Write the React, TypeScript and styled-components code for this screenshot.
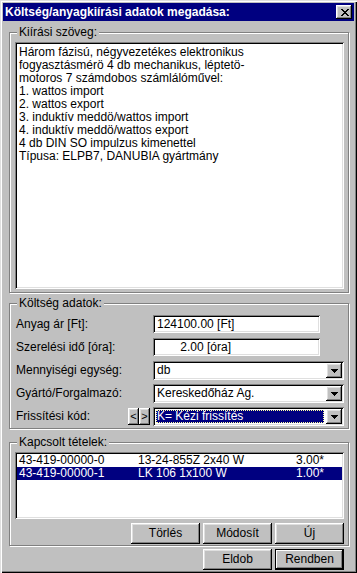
import React from "react";
import styled, { createGlobalStyle, css } from "styled-components";

const GlobalStyle = createGlobalStyle`
  html, body { margin: 0; padding: 0; background: #c0c0c0; }
  body { font-family: "Liberation Sans", Arial, sans-serif; font-size: 12px; }
  * { box-sizing: border-box; }
`;

const raised = css`
  background: #c0c0c0;
  box-shadow: inset -1px -1px #000, inset 1px 1px #fff, inset -2px -2px #808080, inset 2px 2px #dfdfdf;
`;

const sunken = css`
  background: #fff;
  box-shadow: inset 1px 1px #808080, inset -1px -1px #fff, inset 2px 2px #000, inset -2px -2px #dfdfdf;
`;

const Window = styled.div`
  width: 357px;
  height: 573px;
  background: #c0c0c0;
  padding: 3px;
  box-shadow: inset 1px 1px #dfdfdf, inset 2px 2px #fff, inset -1px -1px #000, inset -2px -2px #808080;
  display: flex;
  flex-direction: column;
  color: #000;
  font-family: "Liberation Sans", Arial, sans-serif;
  font-size: 12px;
  line-height: 13px;
`;

const TitleBar = styled.div`
  height: 18px;
  flex: none;
  background: #000080;
  color: #fff;
  font-weight: bold;
  font-size: 12px;
  display: flex;
  align-items: center;
  justify-content: space-between;
  padding: 0 2px;
`;

const TitleText = styled.span`
  white-space: nowrap;
`;

const CloseButton = styled.div`
  ${raised};
  width: 16px;
  height: 14px;
  display: flex;
  align-items: center;
  justify-content: center;
  padding-left: 1px;
`;

const Group = styled.div<{ $mt: number }>`
  position: relative;
  flex: none;
  margin: ${(p) => p.$mt}px 5px 0 6px;
  border: 1px solid #808080;
  box-shadow: inset 1px 1px #fff, 1px 1px #fff;
`;

const GroupLabel = styled.span`
  position: absolute;
  top: -7px;
  left: 7px;
  padding: 0 2px;
  background: #c0c0c0;
  line-height: 13px;
  white-space: nowrap;
`;

const TextGroupBody = styled.div`
  padding: 9px 4px 3px 5px;
`;

const MemoBox = styled.div`
  ${sunken};
  width: 329px;
  height: 247px;
  padding: 4px 4px 2px 4px;
  white-space: pre-line;
  line-height: 13px;
`;

const FormGrid = styled.div`
  display: grid;
  grid-template-columns: 137px 191px;
  grid-auto-rows: 19px;
  row-gap: 4px;
  padding: 11px 4px 2px 6px;
`;

const FieldLabel = styled.div`
  display: flex;
  align-items: center;
  justify-content: space-between;
  padding-right: 3px;
  white-space: nowrap;
`;

const StepButtons = styled.div`
  display: flex;
  height: 17px;
`;

const StepButton = styled.div`
  ${raised};
  width: 11px;
  height: 17px;
  display: flex;
  align-items: center;
  justify-content: center;
  font-size: 11px;
  line-height: 11px;
`;

const Edit = styled.div`
  ${sunken};
  width: 167px;
  height: 18px;
  padding: 0 3px 0 4px;
  display: flex;
  align-items: center;
`;

const EditValue = styled.span`
  width: 74px;
  text-align: right;
  white-space: nowrap;
`;

const Combo = styled.div`
  ${sunken};
  width: 191px;
  height: 19px;
  padding: 2px;
  display: flex;
  align-items: stretch;
`;

const ComboValue = styled.div<{ $selected?: boolean }>`
  flex: 1;
  display: flex;
  align-items: center;
  padding-left: 2px;
  margin-right: 1px;
  white-space: nowrap;
  overflow: hidden;
  ${(p) =>
    p.$selected &&
    css`
      margin: 1px 2px 1px 1px;
      padding-left: 1px;
      background: #000080;
      color: #fff;
      outline: 1px dotted #ffffa0;
      outline-offset: -1px;
    `}
`;

const ComboButton = styled.div`
  ${raised};
  width: 16px;
  display: flex;
  align-items: center;
  justify-content: center;
`;

const ListGroupBody = styled.div`
  padding: 9px 4px 1px 5px;
`;

const ListBox = styled.div`
  ${sunken};
  width: 329px;
  height: 67px;
  padding: 2px;
`;

const ListRow = styled.div<{ $selected?: boolean }>`
  display: grid;
  grid-template-columns: 119px 158px 1fr;
  height: 13px;
  line-height: 13px;
  padding-left: 2px;
  white-space: nowrap;
  ${(p) =>
    p.$selected &&
    css`
      background: #000080;
      color: #fff;
    `}
`;

const ButtonRow = styled.div<{ $mt: number; $mr: number }>`
  display: flex;
  justify-content: flex-end;
  gap: 3px;
  margin: ${(p) => p.$mt}px ${(p) => p.$mr}px 0 0;
  flex: none;
`;

const PushButton = styled.div<{ $default?: boolean }>`
  width: 69px;
  height: 21px;
  display: flex;
  align-items: center;
  justify-content: center;
  ${raised};
  ${(p) =>
    p.$default &&
    css`
      box-shadow: inset 0 0 0 1px #000, inset -2px -2px #000, inset 2px 2px #fff, inset -3px -3px #808080;
    `}
`;

const ArrowDown = () => (
  <svg width="7" height="4" viewBox="0 0 7 4" shapeRendering="crispEdges">
    <path d="M0 0h7v1H0z M1 1h5v1H1z M2 2h3v1H2z M3 3h1v1H3z" fill="#000" />
  </svg>
);

const CloseGlyph = () => (
  <svg width="8" height="7" viewBox="0 0 8 7" shapeRendering="crispEdges">
    <path
      d="M0 0h2v1H0z M6 0h2v1H6z M1 1h2v1H1z M5 1h2v1H5z M2 2h4v1H2z M3 3h2v1H3z M2 4h4v1H2z M1 5h2v1H1z M5 5h2v1H5z M0 6h2v1H0z M6 6h2v1H6z"
      fill="#000"
    />
  </svg>
);

const memoText = `Három fázisú, négyvezetékes elektronikus
fogyasztásmérö 4 db mechanikus, léptetö-
motoros 7 számdobos számlálóművel:
1. wattos import
2. wattos export
3. induktív meddö/wattos import
4. induktív meddö/wattos export
4 db DIN SO impulzus kimenettel
Típusa: ELPB7, DANUBIA gyártmány`;

const items = [
  { code: "43-419-00000-0", name: "13-24-855Z 2x40 W", qty: "3.00*" },
  { code: "43-419-00000-1", name: "LK 106 1x100 W", qty: "1.00*", selected: true },
];

export default function App() {
  return (
    <>
      <GlobalStyle />
      <Window>
        <TitleBar>
          <TitleText>Költség/anyagkiírási adatok megadása:</TitleText>
          <CloseButton>
            <CloseGlyph />
          </CloseButton>
        </TitleBar>

        <Group $mt={11}>
          <GroupLabel>Kiírási szöveg:</GroupLabel>
          <TextGroupBody>
            <MemoBox>{memoText}</MemoBox>
          </TextGroupBody>
        </Group>

        <Group $mt={10}>
          <GroupLabel>Költség adatok:</GroupLabel>
          <FormGrid>
            <FieldLabel>Anyag ár [Ft]:</FieldLabel>
            <Edit>
              <EditValue>124100.00 [Ft]</EditValue>
            </Edit>
            <FieldLabel>Szerelési idő [óra]:</FieldLabel>
            <Edit>
              <EditValue>2.00 [óra]</EditValue>
            </Edit>
            <FieldLabel>Mennyiségi egység:</FieldLabel>
            <Combo>
              <ComboValue>db</ComboValue>
              <ComboButton>
                <ArrowDown />
              </ComboButton>
            </Combo>
            <FieldLabel>Gyártó/Forgalmazó:</FieldLabel>
            <Combo>
              <ComboValue>Kereskedőház Ag.</ComboValue>
              <ComboButton>
                <ArrowDown />
              </ComboButton>
            </Combo>
            <FieldLabel>
              <span>Frissítési kód:</span>
              <StepButtons>
                <StepButton>&lt;</StepButton>
                <StepButton>&gt;</StepButton>
              </StepButtons>
            </FieldLabel>
            <Combo>
              <ComboValue $selected>K= Kézi frissítés</ComboValue>
              <ComboButton>
                <ArrowDown />
              </ComboButton>
            </Combo>
          </FormGrid>
        </Group>

        <Group $mt={13}>
          <GroupLabel>Kapcsolt tételek:</GroupLabel>
          <ListGroupBody>
            <ListBox>
              {items.map((it) => (
                <ListRow key={it.code} $selected={it.selected}>
                  <span>{it.code}</span>
                  <span>{it.name}</span>
                  <span>{it.qty}</span>
                </ListRow>
              ))}
            </ListBox>
            <ButtonRow $mt={4} $mr={0}>
              <PushButton>Törlés</PushButton>
              <PushButton>Módosít</PushButton>
              <PushButton>Új</PushButton>
            </ButtonRow>
          </ListGroupBody>
        </Group>

        <ButtonRow $mt={3} $mr={10}>
          <PushButton>Eldob</PushButton>
          <PushButton $default>Rendben</PushButton>
        </ButtonRow>
      </Window>
    </>
  );
}
